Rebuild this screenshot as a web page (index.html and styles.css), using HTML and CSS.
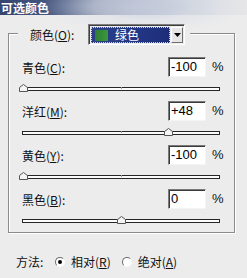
FILE: index.html
```html
<!DOCTYPE html>
<html>
<head>
<meta charset="utf-8">
<link rel="stylesheet" href="styles.css">
</head>
<body>
<div class="title"><span>可选颜色</span></div>
<div class="haze"></div>
<div class="panel">
  <div class="legend">
    <span class="lbl">颜色(<u>O</u>):</span>
    <div class="select">
      <div class="field"><i class="swatch"></i><span class="opt">绿色</span></div>
      <div class="arrow"><svg width="7" height="4" viewBox="0 0 7 4"><polygon points="0,0 7,0 3.5,4" fill="#000"/></svg></div>
    </div>
  </div>
  <div class="row">
    <div class="head"><span class="lbl">青色(<u>C</u>):</span><span class="inp">-100</span><span class="pct">%</span></div>
    <div class="track"><i class="tick"></i><svg class="thumb" style="left:0%" width="9" height="8" viewBox="0 0 9 8"><polygon points="0.5,7.5 0.5,3.5 4.5,0.5 8.5,3.5 8.5,7.5" fill="#f4f4f4" stroke="#555"/></svg></div>
  </div>
  <div class="row">
    <div class="head"><span class="lbl">洋红(<u>M</u>):</span><span class="inp">+48</span><span class="pct">%</span></div>
    <div class="track"><i class="tick"></i><svg class="thumb" style="left:74%" width="9" height="8" viewBox="0 0 9 8"><polygon points="0.5,7.5 0.5,3.5 4.5,0.5 8.5,3.5 8.5,7.5" fill="#f4f4f4" stroke="#555"/></svg></div>
  </div>
  <div class="row">
    <div class="head"><span class="lbl">黄色(<u>Y</u>):</span><span class="inp">-100</span><span class="pct">%</span></div>
    <div class="track"><i class="tick"></i><svg class="thumb" style="left:0%" width="9" height="8" viewBox="0 0 9 8"><polygon points="0.5,7.5 0.5,3.5 4.5,0.5 8.5,3.5 8.5,7.5" fill="#f4f4f4" stroke="#555"/></svg></div>
  </div>
  <div class="row">
    <div class="head"><span class="lbl">黑色(<u>B</u>):</span><span class="inp">0</span><span class="pct">%</span></div>
    <div class="track"><i class="tick"></i><svg class="thumb" style="left:50%" width="9" height="8" viewBox="0 0 9 8"><polygon points="0.5,7.5 0.5,3.5 4.5,0.5 8.5,3.5 8.5,7.5" fill="#f4f4f4" stroke="#555"/></svg></div>
  </div>
</div>
<div class="method">
  <span class="mlbl">方法:</span>
  <span class="radio on"></span><span class="rtxt">相对(<u>R</u>)</span>
  <span class="radio"></span><span class="rtxt">绝对(<u>A</u>)</span>
</div>
</body>
</html>
```
FILE: styles.css
```css
html, body {
  margin: 0;
  padding: 0;
}
body {
  width: 247px;
  height: 278px;
  overflow: hidden;
  background: #ececec;
  font-family: "Noto Sans CJK SC", "Liberation Sans", sans-serif;
  font-size: 12px;
  color: #111;
  position: relative;
}
u {
  text-decoration: underline;
  text-underline-offset: 1px;
}
.title {
  height: 15px;
  box-sizing: border-box;
  padding-top: 1px;
  background: linear-gradient(to right, #34466f 0, #4a5b84 25%, #7b88a6 50%, #b9c0d0 72%, #dfe1e6 88%, #e6e6e8 100%);
}
.title span {
  display: block;
  margin: 0 0 0 1px;
  color: #fff;
  font-weight: bold;
  font-size: 12px;
  line-height: 14px;
}
.haze {
  position: absolute;
  left: 40px;
  top: 0;
  width: 190px;
  height: 34px;
  background: radial-gradient(ellipse at 55% 20%, rgba(200,206,222,0.9) 0, rgba(220,224,232,0.6) 35%, rgba(236,236,236,0) 70%);
  pointer-events: none;
}
.panel {
  margin: 18px 0 0 8px;
  width: 227px;
  box-sizing: border-box;
  border: 1px solid #8a8a8a;
  box-shadow: 1px 1px 0 #fff, inset 1px 1px 0 #fff;
  padding-bottom: 9px;
}
.legend {
  position: relative;
  z-index: 1;
  display: flex;
  align-items: center;
  margin: -10px 0 0 9px;
  width: 172px;
  height: 21px;
  box-sizing: border-box;
  padding: 0 5px 0 12px;
  background: #ececec;
}
.legend .lbl {
  line-height: 14px;
}
.select {
  margin-left: auto;
  display: flex;
  width: 97px;
  height: 21px;
  box-sizing: border-box;
  border: 1px solid;
  border-color: #7d7d7d #fff #fff #7d7d7d;
  box-shadow: inset 1px 1px 0 #404040;
  padding: 2px 1px 1px 2px;
  gap: 1px;
}
.field {
  flex: 1;
  display: flex;
  align-items: center;
  gap: 7px;
  padding-left: 4px;
  background: linear-gradient(to right, #2c3f86, #223685 60%, #1d2c78);
  outline: 1px dotted #d0d0d0;
  outline-offset: -1px;
}
.swatch {
  display: block;
  width: 13px;
  height: 11px;
  background: linear-gradient(to right, #2f7d34, #3a9a3c);
}
.opt {
  color: #fff;
  line-height: 14px;
}
.arrow {
  width: 12px;
  display: flex;
  align-items: center;
  justify-content: center;
  background: #e6e6e6;
  border: 1px solid;
  border-color: #fff #6f6f6f #6f6f6f #fff;
  box-sizing: border-box;
}
.row {
  margin: 12px 0 0 13px;
  width: 200px;
}
.row + .row {
  margin-top: 10px;
}
.head {
  display: grid;
  grid-template-columns: 1fr 38px 16px;
  align-items: center;
  height: 20px;
}
.head .lbl {
  line-height: 14px;
  padding-top: 1px;
}
.inp {
  height: 20px;
  box-sizing: border-box;
  background: #fff;
  border: 1px solid;
  border-color: #7a7a7a #f4f4f4 #f4f4f4 #7a7a7a;
  box-shadow: inset 1px 1px 0 #3a3a3a;
  font-family: "Liberation Sans", Arial, sans-serif;
  font-size: 13px;
  line-height: 18px;
  padding-left: 2px;
  color: #000;
}
.pct {
  padding-left: 6px;
  font-family: "Liberation Sans", Arial, sans-serif;
  font-size: 13px;
  line-height: 14px;
}
.track {
  position: relative;
  margin-top: 10px;
  width: 198px;
  height: 4px;
  box-sizing: border-box;
  border: 1px solid #262626;
  background: #fbfbfb;
}
.tick {
  position: absolute;
  left: 98px;
  top: -1px;
  width: 1px;
  height: 2px;
  background: #9a9a9a;
}
.thumb {
  position: absolute;
  bottom: -2px;
  margin-left: -4px;
  display: block;
}
.method {
  display: flex;
  align-items: center;
  margin: 21px 0 0 16px;
  height: 16px;
}
.mlbl {
  width: 39px;
  line-height: 14px;
}
.radio {
  width: 10px;
  height: 10px;
  box-sizing: border-box;
  border-radius: 50%;
  border: 1px solid;
  border-color: #6a6a6a #fafafa #fafafa #6a6a6a;
  background: #fff;
  margin-right: 6px;
  position: relative;
}
.radio.on::after {
  content: "";
  position: absolute;
  left: 2px;
  top: 2px;
  width: 4px;
  height: 4px;
  border-radius: 50%;
  background: #000;
}
.rtxt {
  line-height: 14px;
  margin-right: 11px;
}
```
